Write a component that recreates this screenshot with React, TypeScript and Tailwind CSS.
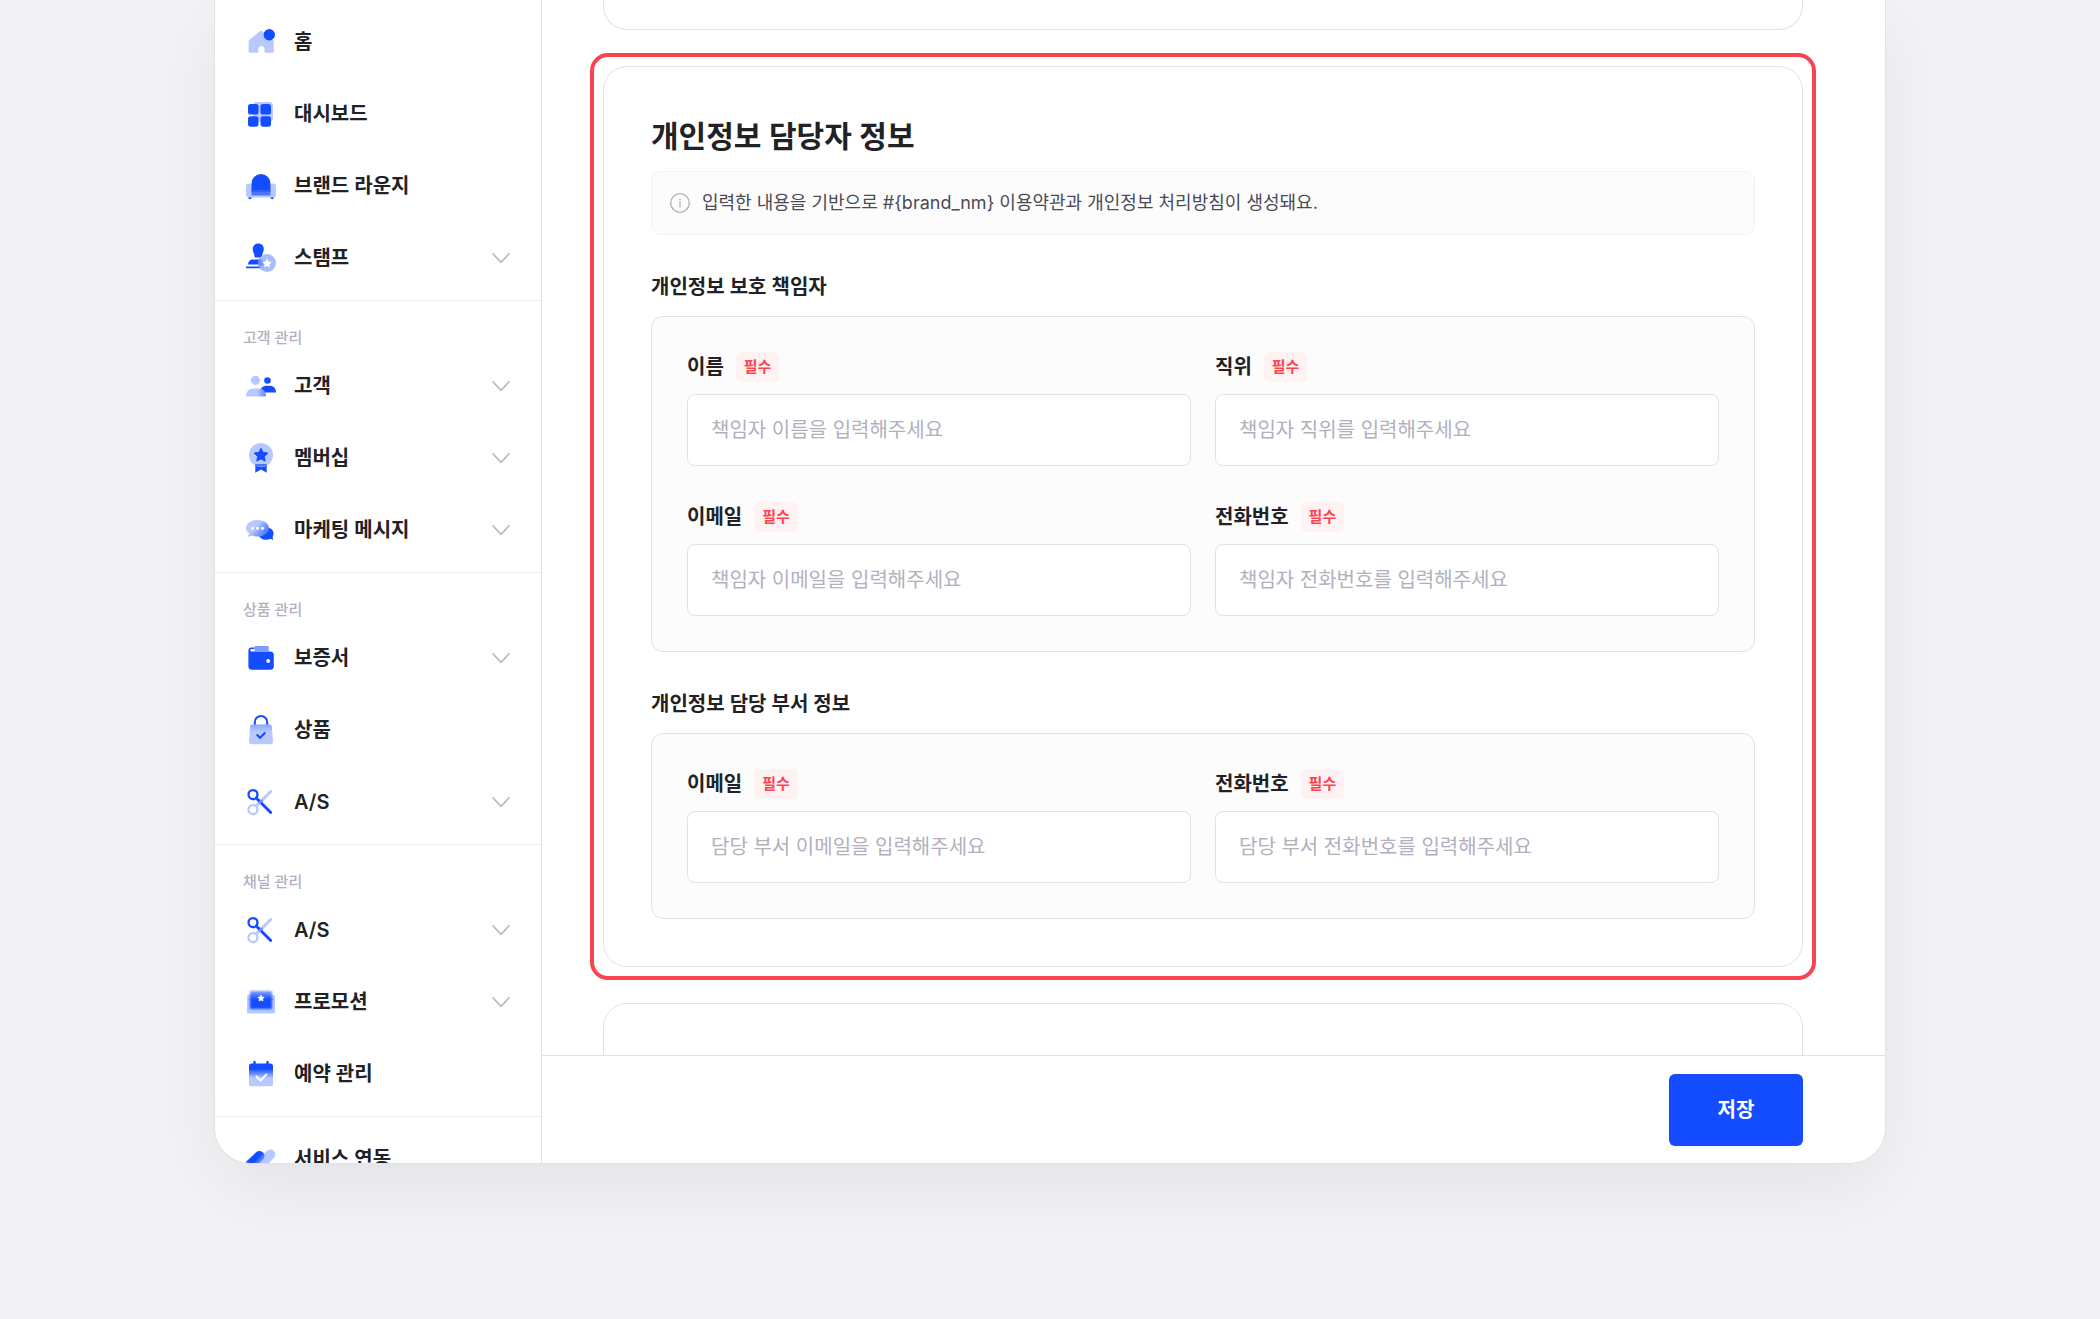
import { useState, type ReactNode } from 'react'

const BLUE = '#144dff'
const PALE = '#b8c9ff'

function Icon({ children }: { children: ReactNode }) {
  return (
    <svg viewBox="0 0 30 30" className="h-[30px] w-[30px] shrink-0" fill="none" aria-hidden="true">
      {children}
    </svg>
  )
}

function HomeIcon() {
  return (
    <Icon>
      <path d="M13.6 4.4a2 2 0 0 1 2.6 0L26.5 12.5c.8.6 1.3 1.4 1.3 2.4v9.3c0 1-.6 1.6-1.6 1.6h-6.4c-.8 0-1.3-.5-1.3-1.3V21.4c0-1.4-1-2.4-3-2.4s-3.1 1-3.1 2.4v3.1c0 .8-.5 1.3-1.3 1.3H4.2c-1 0-1.6-.6-1.6-1.6v-9.3c0-1 .4-1.8 1.2-2.4z" fill={PALE} />
      <circle cx="23.3" cy="7.7" r="5.7" fill={BLUE} />
    </Icon>
  )
}

function DashboardIcon() {
  return (
    <Icon>
      <rect x="7" y="3" width="20" height="20" rx="4" fill={PALE} />
      <rect x="2" y="5" width="10.5" height="10.5" rx="2.6" fill={BLUE} />
      <rect x="14.5" y="5" width="10.5" height="10.5" rx="2.6" fill={BLUE} />
      <rect x="2" y="17.2" width="10.5" height="10.5" rx="2.6" fill={BLUE} />
      <rect x="14.5" y="17.2" width="10.5" height="10.5" rx="2.6" fill={BLUE} />
    </Icon>
  )
}

function LoungeIcon() {
  return (
    <Icon>
      <circle cx="4" cy="26.5" r="1.7" fill={BLUE} />
      <circle cx="26.2" cy="26.5" r="1.7" fill={BLUE} />
      <path d="M0 15.200a2.700 2.700 0 0 1 2.700-2.700h1a2.300 2.300 0 0 1 2.300 2.300V19h18v-4.200a2.300 2.300 0 0 1 2.300-2.300h1A2.700 2.700 0 0 1 30 15.200V24a2.400 2.400 0 0 1-2.400 2.400H2.400A2.400 2.400 0 0 1 0 24z" fill={PALE} />
      <path d="M5.500 19v-6.500a9.500 9.500 0 0 1 19 0V19z" fill={BLUE} />
      <path d="M5.500 19h19v5.500h-19z" fill="#4a76ff" />
      <path d="M5.500 19h19v2h-19z" fill="#2f62ff" />
    </Icon>
  )
}

function StampIcon() {
  return (
    <Icon>
      <path d="M12.2.5c3.3 0 5.6 2.3 5.6 5.4 0 3.2-1.8 4.3-2 8.6H8.7c-.2-4.3-2-5.4-2-8.6C6.7 2.8 9 .5 12.2.5z" fill={BLUE} />
      <path d="M2 21.5c.2-3 1.800-5 4.600-5h11.500c2.800 0 4.400 2 4.600 5zM0 23.500h20v1.800H0z" fill={BLUE} />
      <circle cx="21" cy="20" r="9" fill="#a3b9ff" fillOpacity=".93" />
      <path d="M14 14.500a9 9 0 0 0-1 9.500l5-2z" fill={BLUE} fillOpacity=".35" />
      <path d="m21 15.600 1.500 2.900 3.200.5-2.300 2.300.5 3.200-2.900-1.500-2.900 1.500.5-3.200-2.300-2.300 3.200-.5z" fill="#fff" />
    </Icon>
  )
}

function CustomerIcon() {
  return (
    <Icon>
      <defs>
        <linearGradient id="customerBlend" x1="11" y1="0" x2="20" y2="0" gradientUnits="userSpaceOnUse">
          <stop stopColor={PALE} />
          <stop offset="1" stopColor="#6488ff" />
        </linearGradient>
      </defs>
      <circle cx="9.5" cy="9.3" r="4.6" fill={PALE} />
      <circle cx="21.5" cy="9.5" r="3.3" fill={BLUE} />
      <path d="M14 21.5c0-4.2 2.800-6.800 6.500-6.800h3.300c3.600 0 6.200 2.600 6.200 6.800z" fill={BLUE} />
      <path d="M0 25.500c0-5 2.800-8 7-8h6c4.300 0 7 3 7 8z" fill="url(#customerBlend)" />
    </Icon>
  )
}

function MembershipIcon() {
  return (
    <Icon>
      <path d="M9.3 18h11.400v11.800L15 26.500l-5.700 3.300z" fill={BLUE} />
      <circle cx="15" cy="12" r="12" fill={PALE} />
      <path d="M9.300 21h11.400v2.500H9.300z" fill="#4a76ff" />
      <path d="m15 5.200 2.100 4.200 4.700.7-3.400 3.300.8 4.700-4.200-2.200-4.200 2.200.8-4.700-3.400-3.300 4.700-.7z" fill={BLUE} stroke={BLUE} strokeLinejoin="round" />
    </Icon>
  )
}

function MessageIcon() {
  return (
    <Icon>
      <defs>
        <linearGradient id="messageBlend" x1="10" y1="11" x2="21" y2="20" gradientUnits="userSpaceOnUse">
          <stop stopColor={PALE} />
          <stop offset="1" stopColor="#3d6cff" />
        </linearGradient>
      </defs>
      <ellipse cx="20" cy="18.5" rx="7.6" ry="6.3" fill={BLUE} />
      <path d="M22 22.500 27 25l-.6-5z" fill={BLUE} />
      <path d="M11.800 5c6.500 0 11.300 3.800 11.300 8.300S18.300 21.600 11.800 21.600c-2 0-3.900-.3-5.500-1L1.500 22l1.700-3.700C1.200 17 0 15.200 0 13.300 0 8.800 5.300 5 11.800 5z" fill="url(#messageBlend)" />
      <circle cx="6.5" cy="13.3" r="1.5" fill="#fff" />
      <circle cx="11.5" cy="13.3" r="1.5" fill="#fff" />
      <circle cx="16.5" cy="13.3" r="1.5" fill="#fff" />
    </Icon>
  )
}

function WalletIcon() {
  return (
    <Icon>
      <path d="M2.400 7.500C2.400 5.800 3.700 4.600 5.300 4.600h3.200v1.500H5.700c-.9 0-1.400.4-1.400 1.100 0 .8.500 1.300 1.400 1.300h18.800c1.900 0 3.300 1.300 3.300 3.200v11.800c0 2-1.400 3.300-3.300 3.300H5.800c-2 0-3.400-1.300-3.400-3.300z" fill={BLUE} />
      <path d="M8.500 3h13.300a1 1 0 0 1 1 1v4.800H8.500z" fill="#7e9cff" />
      <circle cx="22.200" cy="18" r="1.900" fill="#fff" />
    </Icon>
  )
}

function ProductIcon() {
  return (
    <Icon>
      <defs>
        <linearGradient id="bagBlend" x1="0" y1="9" x2="0" y2="17" gradientUnits="userSpaceOnUse">
          <stop stopColor="#86a3ff" />
          <stop offset="1" stopColor={PALE} />
        </linearGradient>
      </defs>
      <path d="M8.800 12V7.200a6.200 6.200 0 0 1 12.400 0V12" stroke={BLUE} strokeWidth="2" />
      <path d="M6.500 9.500h17c1.400 0 2.300.8 2.400 2.200L27 26.500c.1 1.600-1 2.700-2.500 2.700h-19C4 29.200 2.900 28.100 3 26.500l1.100-14.800c.1-1.400 1-2.200 2.400-2.200z" fill="url(#bagBlend)" />
      <path d="m10.700 19.500 3.300 3.300 5.300-5.300" stroke={BLUE} strokeWidth="2" />
    </Icon>
  )
}

function ScissorsIcon() {
  return (
    <Icon>
      <circle cx="7" cy="22.600" r="4.500" stroke={PALE} strokeWidth="2.300" />
      <path d="m10.500 18.800 14.200-14.300" stroke={PALE} strokeWidth="3" strokeLinecap="round" />
      <circle cx="7" cy="7.600" r="4.500" stroke={BLUE} strokeWidth="2.300" />
      <path d="m10.500 11.200 14.200 14.300" stroke={BLUE} strokeWidth="3" strokeLinecap="round" />
      <path d="m13.200 16.200 3.200-3.200" stroke="#6f91ff" strokeWidth="2.600" />
    </Icon>
  )
}

function PromotionIcon() {
  return (
    <Icon>
      <defs>
        <linearGradient id="promoBlend" x1="0" y1="4" x2="0" y2="12" gradientUnits="userSpaceOnUse">
          <stop stopColor="#86a3ff" />
          <stop offset="1" stopColor={BLUE} />
        </linearGradient>
        <filter id="promoSoft" x="-20%" y="-20%" width="140%" height="140%">
          <feGaussianBlur stdDeviation=".9" />
        </filter>
      </defs>
      <path d="M1 8.500 4 7.500h22l3 1V25c0 1-.6 1.600-1.600 1.600H2.600C1.600 26.600 1 26 1 25z" fill={PALE} />
      <path d="M4 4h22v18H4z" fill="url(#promoBlend)" filter="url(#promoSoft)" />
      <path d="m3 12 12 6.500L27 12" stroke="#2453f0" strokeWidth=".6" />
      <path d="m15 8 1 2 2.200.3-1.600 1.600.4 2.200-2-1-2 1 .4-2.200-1.600-1.600 2.200-.3z" fill="#fff" stroke="#fff" strokeWidth=".6" />
    </Icon>
  )
}

function CalendarIcon() {
  return (
    <Icon>
      <defs>
        <linearGradient id="calendarBlend" x1="0" y1="10" x2="0" y2="19" gradientUnits="userSpaceOnUse">
          <stop stopColor={BLUE} />
          <stop offset="1" stopColor={PALE} />
        </linearGradient>
      </defs>
      <path d="M8.500 3v4M21.500 3v4" stroke={BLUE} strokeWidth="2.400" strokeLinecap="round" />
      <rect x="3" y="4.500" width="24" height="22.800" rx="2.600" fill="url(#calendarBlend)" />
      <path d="m10.500 17.500 4 4 6-6" stroke="#fff" strokeWidth="2" strokeLinecap="round" />
    </Icon>
  )
}

function IntegrationIcon() {
  return (
    <Icon>
      <defs>
        <linearGradient id="linkBlend" x1="14" y1="11" x2="21" y2="17" gradientUnits="userSpaceOnUse">
          <stop stopColor={BLUE} />
          <stop offset="1" stopColor={PALE} />
        </linearGradient>
      </defs>
      <path d="M12 23 24.300 10.500" stroke={PALE} strokeWidth="10" strokeLinecap="round" />
      <path d="M4 21 13.500 12" stroke="url(#linkBlend)" strokeWidth="10" strokeLinecap="round" />
    </Icon>
  )
}

function Chevron() {
  return (
    <svg viewBox="0 0 18 10" className="ml-auto h-[10px] w-[18px]" fill="none" aria-hidden="true">
      <path d="m.6.6 8.400 8.700L17.400.6" stroke="#b0b0be" strokeWidth="1.500" />
    </svg>
  )
}

type MenuItem = { label: string; icon: ReactNode; expandable?: boolean }

const menu: { title?: string; items: MenuItem[] }[] = [
  {
    items: [
      { label: '홈', icon: <HomeIcon /> },
      { label: '대시보드', icon: <DashboardIcon /> },
      { label: '브랜드 라운지', icon: <LoungeIcon /> },
      { label: '스탬프', icon: <StampIcon />, expandable: true },
    ],
  },
  {
    title: '고객 관리',
    items: [
      { label: '고객', icon: <CustomerIcon />, expandable: true },
      { label: '멤버십', icon: <MembershipIcon />, expandable: true },
      { label: '마케팅 메시지', icon: <MessageIcon />, expandable: true },
    ],
  },
  {
    title: '상품 관리',
    items: [
      { label: '보증서', icon: <WalletIcon />, expandable: true },
      { label: '상품', icon: <ProductIcon /> },
      { label: 'A/S', icon: <ScissorsIcon />, expandable: true },
    ],
  },
  {
    title: '채널 관리',
    items: [
      { label: 'A/S', icon: <ScissorsIcon />, expandable: true },
      { label: '프로모션', icon: <PromotionIcon />, expandable: true },
      { label: '예약 관리', icon: <CalendarIcon /> },
    ],
  },
  { items: [{ label: '서비스 연동', icon: <IntegrationIcon /> }] },
]

function Sidebar() {
  return (
    <nav className="w-[327px] shrink-0 overflow-hidden border-r border-[#e1e1e8]">
      {menu.map((group, i) => (
        <div key={i} className="border-b border-[#efeff2] py-1.5">
          {group.title && (
            <h2 className="h-[43px] px-7 pt-[19px] text-[15px] leading-6 font-medium text-[#b0b0be]">{group.title}</h2>
          )}
          {group.items.map((item) => (
            <a key={item.label} href="#" className="flex h-[72px] items-center gap-[18px] px-[31px]">
              {item.icon}
              <span className="text-[20px] leading-7 font-semibold">{item.label}</span>
              {item.expandable && <Chevron />}
            </a>
          ))}
        </div>
      ))}
    </nav>
  )
}

type FieldProps = { id: string; label: string; placeholder: string; type?: string }

function Field({ id, label, placeholder, type = 'text' }: FieldProps) {
  const [value, setValue] = useState('')

  return (
    <div className="flex flex-col gap-3">
      <label htmlFor={id} className="flex items-center gap-3 text-[20px] leading-7 font-semibold">
        {label}
        <span className="flex h-[30px] items-center rounded-md bg-[#fff2f3] px-2 text-[15px] leading-6 text-[#ff424f]">필수</span>
      </label>
      <input
        id={id}
        type={type}
        value={value}
        onChange={(e) => setValue(e.target.value)}
        placeholder={placeholder}
        className="h-[72px] w-full rounded-lg border border-[#e1e1e8] bg-white px-[23px] text-[20px] leading-7 placeholder-[#b0b0be] focus:border-[#144dff] focus:outline-none"
      />
    </div>
  )
}

function FieldGroup({ title, children }: { title: string; children: ReactNode }) {
  return (
    <section className="mt-[38px]">
      <h3 className="mb-[15px] text-[20px] leading-7 font-semibold">{title}</h3>
      <div className="grid grid-cols-2 gap-x-6 gap-y-9 rounded-xl border border-[#e1e1e8] bg-[#fcfcfc] p-[35px]">{children}</div>
    </section>
  )
}

export default function App() {
  return (
    <div className="min-h-screen overflow-hidden bg-[#f3f3f5] font-['Inter','Noto_Sans_CJK_KR',sans-serif] text-[#222226]">
      <div className="mx-auto flex h-[calc(100vh-155px)] w-full max-w-[1672px] overflow-hidden rounded-b-[36px] border border-t-0 border-[#e1e1e8] bg-white shadow-[0_24px_80px_rgba(20,10,60,0.065)]">
        <Sidebar />

        <div className="flex min-w-0 flex-1 flex-col">
          <main className="flex min-h-0 flex-1 flex-col gap-9 overflow-hidden pr-[82px] pl-[61px]">
            <div className="h-[30px] shrink-0 rounded-b-3xl border border-t-0 border-[#e1e1e8]" />

            <div className="relative shrink-0 rounded-3xl border border-[#e1e1e8] p-[47px]">
              <div className="pointer-events-none absolute -inset-3.5 rounded-[18px] border-4 border-[#fa4350]" />
              <h1 className="text-[30px] leading-[45px] font-semibold">개인정보 담당자 정보</h1>
              <p className="mt-3 flex h-16 items-center gap-3 rounded-[10px] border border-[#f2f2f4] bg-[#fcfcfc] px-[18px] text-[18px] leading-7 text-[#4a4a55]">
                <svg viewBox="0 0 20 20" className="h-5 w-5 shrink-0" fill="none" aria-hidden="true">
                  <circle cx="10" cy="10" r="9.300" stroke="#b0b0be" strokeWidth="1.300" />
                  <path d="M10 8.500v6M10 5.800v1.500" stroke="#b0b0be" strokeWidth="1.300" />
                </svg>
                {'입력한 내용을 기반으로 #{brand_nm} 이용약관과 개인정보 처리방침이 생성돼요.'}
              </p>

              <FieldGroup title="개인정보 보호 책임자">
                <Field id="officer-name" label="이름" placeholder="책임자 이름을 입력해주세요" />
                <Field id="officer-position" label="직위" placeholder="책임자 직위를 입력해주세요" />
                <Field id="officer-email" label="이메일" type="email" placeholder="책임자 이메일을 입력해주세요" />
                <Field id="officer-phone" label="전화번호" type="tel" placeholder="책임자 전화번호를 입력해주세요" />
              </FieldGroup>

              <FieldGroup title="개인정보 담당 부서 정보">
                <Field id="department-email" label="이메일" type="email" placeholder="담당 부서 이메일을 입력해주세요" />
                <Field id="department-phone" label="전화번호" type="tel" placeholder="담당 부서 전화번호를 입력해주세요" />
              </FieldGroup>
            </div>

            <div className="h-40 shrink-0 rounded-3xl border border-[#e1e1e8]" />
          </main>

          <footer className="flex shrink-0 justify-end border-t border-[#e1e1e8] pt-[18px] pr-[82px] pb-[17px]">
            <button type="button" className="h-[72px] w-[134px] rounded-md bg-[#144dff] text-[20px] leading-7 font-semibold text-white">
              저장
            </button>
          </footer>
        </div>
      </div>
    </div>
  )
}
